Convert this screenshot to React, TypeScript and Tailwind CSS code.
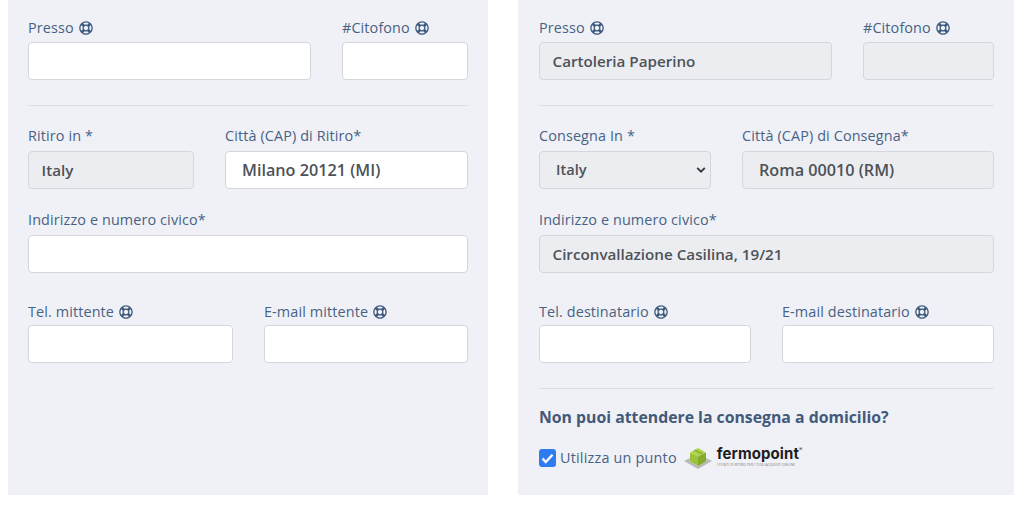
import React from "react";
import { FaRegLifeRing } from "react-icons/fa";

function Label({ text, help }: { text: string; help?: boolean }) {
  return (
    <div className="flex items-center gap-[5px] h-[20px] text-[14.4px] leading-[20px] tracking-[0.12px] text-[#486285]">
      <span>{text}</span>
      {help && <FaRegLifeRing className="w-[14px] h-[14px] text-[#3f5a7e]" />}
    </div>
  );
}

function Box({ value, disabled, big }: { value?: string; disabled?: boolean; big?: boolean }) {
  return (
    <div
      className={
        "h-[38px] rounded-[4px] border flex items-center pt-[1px] font-semibold text-[#4d5258] " +
        (disabled ? "bg-[#ebedf1] border-[#d3d7dd] " : "bg-white border-[#d3d7dd] ") +
        (big ? "pl-[16px] text-[16.2px]" : "pl-[12.5px] text-[15.2px]")
      }
    >
      {value}
    </div>
  );
}

function SelectBox() {
  return (
    <div className="h-[38px] rounded-[4px] border border-[#d3d7dd] bg-[#ebedf1] flex items-center justify-between pl-[16px] pr-[3px] font-semibold text-[14.6px] text-[#4d5258]">
      <span>Italy</span>
      <svg width="10" height="8" viewBox="0 0 10 8" fill="none" className="mr-[1px]">
        <path d="M1.2 1.8 L5 5.6 L8.8 1.8" stroke="#343a40" strokeWidth="1.9" />
      </svg>
    </div>
  );
}

function Field({ label, help, value, disabled, big, select }: { label: string; help?: boolean; value?: string; disabled?: boolean; big?: boolean; select?: boolean }) {
  return (
    <div className="flex flex-col gap-[4px]">
      <Label text={label} help={help} />
      {select ? <SelectBox /> : <Box value={value} disabled={disabled} big={big} />}
    </div>
  );
}

function Logo() {
  return (
    <div className="flex items-center ml-[6px] gap-[4px]">
      <svg width="30" height="24" viewBox="0 0 30 24">
        <path d="M1 15 L15 8 L29 15 L15 23 Z" fill="#b9b9b9" />
        <path d="M6 15 L15 11 L24 15 L15 20 Z" fill="#e4e4e4" />
        <path d="M7 6.5 L15 10.5 L15 20 L7 15.5 Z" fill="#9cc23c" />
        <path d="M23 6.5 L15 10.5 L15 20 L23 15.5 Z" fill="#85ab2d" />
        <path d="M7 6.5 L15 2 L23 6.5 L15 10.5 Z" fill="#b2d452" />
        <path d="M10.5 4.5 L18.5 8.7 L20.5 7.6 L12.5 3.4 Z" fill="#8fb535" />
      </svg>
      <div className="flex flex-col items-start -mt-[3px]">
        <div className="text-[15px] leading-[15px] font-bold tracking-[0.1px] text-[#1d1d1d] font-['Inter',sans-serif]">
          fermopoint<sup className="text-[5px] font-normal align-super">®</sup>
        </div>
        <div className="text-[3.4px] leading-[5px] text-[#777777] whitespace-nowrap mt-[1px] tracking-[0.1px]">
          I PUNTI DI RITIRO PER I TUOI ACQUISTI ONLINE
        </div>
      </div>
    </div>
  );
}

export default function App() {
  return (
    <div className="w-[1024px] h-[506px] bg-white font-['Open_Sans',sans-serif] overflow-hidden flex items-start pl-[8px] gap-[30px]">
      {/* Left panel */}
      <div className="w-[480px] h-[495px] bg-[#eff1f6] px-[20px] pt-[18px] flex flex-col">
        <div className="grid grid-cols-[283px_126px] gap-x-[31px]">
          <Field label="Presso" help />
          <Field label="#Citofono" help />
        </div>
        <div className="h-px bg-[#dcdfe4] mt-[25px] mb-[20px]" />
        <div className="grid grid-cols-[166px_243px] gap-x-[31px] [&>div]:gap-[5px]">
          <Field label="Ritiro in *" value="Italy" disabled />
          <Field label="Città (CAP) di Ritiro*" value="Milano 20121 (MI)" big />
        </div>
        <div className="mt-[21px] [&>div]:gap-[5px]">
          <Field label="Indirizzo e numero civico*" />
        </div>
        <div className="grid grid-cols-[205px_204px] gap-x-[31px] mt-[29px] [&>div]:gap-[3px]">
          <Field label="Tel. mittente" help />
          <Field label="E-mail mittente" help />
        </div>
      </div>

      {/* Right panel */}
      <div className="w-[496px] h-[495px] bg-[#eff1f6] pl-[21px] pr-[20px] pt-[18px] flex flex-col">
        <div className="grid grid-cols-[293px_131px] gap-x-[31px]">
          <Field label="Presso" help value="Cartoleria Paperino" disabled />
          <Field label="#Citofono" help disabled />
        </div>
        <div className="h-px bg-[#dcdfe4] mt-[25px] mb-[20px]" />
        <div className="grid grid-cols-[172px_252px] gap-x-[31px] [&>div]:gap-[5px]">
          <Field label="Consegna In *" select />
          <Field label="Città (CAP) di Consegna*" value="Roma 00010 (RM)" disabled big />
        </div>
        <div className="mt-[21px] [&>div]:gap-[5px]">
          <Field label="Indirizzo e numero civico*" value="Circonvallazione Casilina, 19/21" disabled />
        </div>
        <div className="grid grid-cols-[212px_212px] gap-x-[31px] mt-[29px] [&>div]:gap-[3px]">
          <Field label="Tel. destinatario" help />
          <Field label="E-mail destinatario" help />
        </div>
        <div className="h-px bg-[#dcdfe4] mt-[25px]" />
        <div className="mt-[18px] text-[15.8px] leading-[20px] font-bold text-[#44597a]">
          Non puoi attendere la consegna a domicilio?
        </div>
        <div className="flex items-center mt-[19px] h-[24px]">
          <div className="w-[17px] h-[18px] rounded-[3px] bg-[#2f7bf0] flex items-center justify-center">
            <svg width="13" height="11" viewBox="0 0 13 11" fill="none">
              <path d="M1.5 5.5 L4.8 9 L11.5 1.8" stroke="white" strokeWidth="2.4" />
            </svg>
          </div>
          <span className="ml-[4px] text-[14.4px] tracking-[0.2px] text-[#486285]">Utilizza un punto</span>
          <Logo />
        </div>
      </div>
    </div>
  );
}
